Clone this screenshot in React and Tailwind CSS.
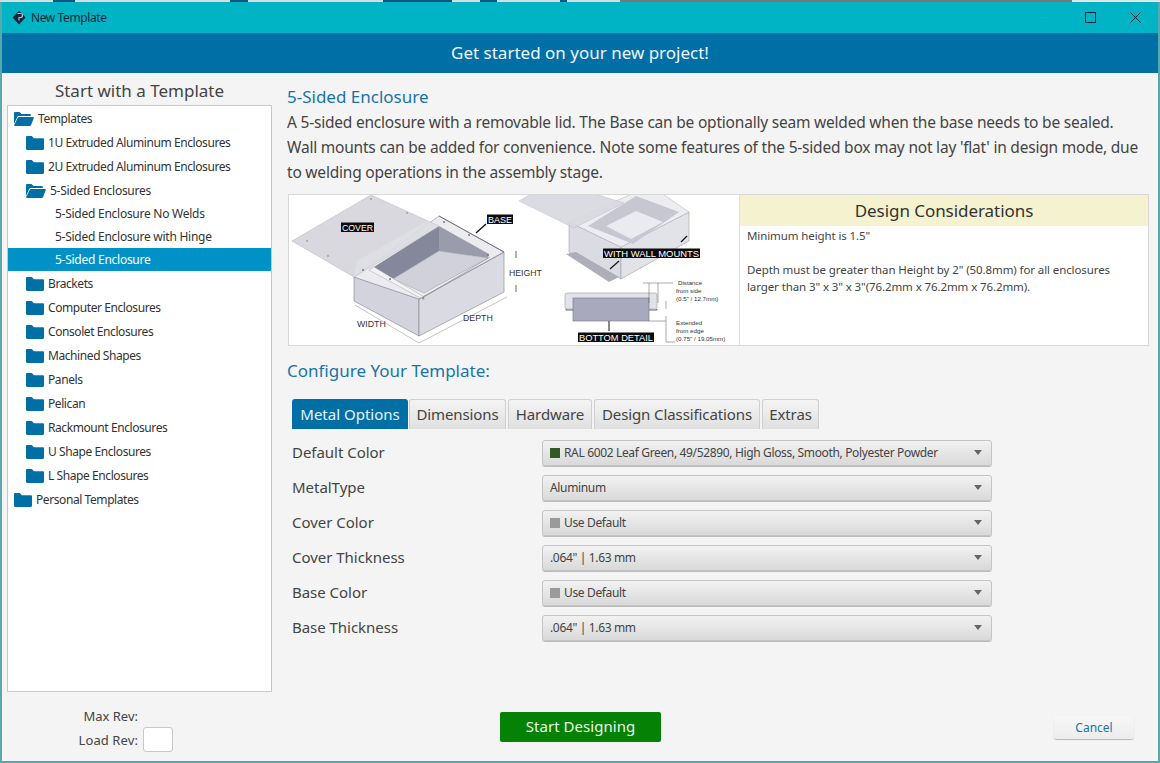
import React from "react";

const FONT = { fontFamily: '"Noto Sans", "Open Sans", sans-serif' };

function FolderClosed() {
  return (
    <svg width="18" height="14" viewBox="0 0 18 14" className="shrink-0">
      <path d="M0 1.2C0 .5.5 0 1.2 0h4.6l2 2.2h9c.7 0 1.2.5 1.2 1.2v9.4c0 .7-.5 1.2-1.2 1.2H1.2C.5 14 0 13.500 0 12.800z" fill="#006fa6" />
    </svg>
  );
}

function FolderOpen() {
  return (
    <svg width="20" height="14" viewBox="0 0 20 14" className="shrink-0">
      <path d="M0 12V1.200C0 .5.500 0 1.200 0h4.300l2 2h8.300c.6 0 1 .4 1 1v1H5c-1 0-1.500.4-1.900 1.200z" fill="#006fa6" />
      <path d="M1 14c-.7 0-1-.5-.8-1L3.600 5.900C3.900 5.300 4.400 5 5 5h14c.7 0 1.100.5.800 1.100l-2.700 7c-.2.600-.7.900-1.300.9z" fill="#006fa6" />
    </svg>
  );
}

function TreeRow({ label, pad, icon, h = "h-6", selected, extra = "", track = "tracking-[-0.42px]" }) {
  return (
    <div
      className={`flex items-center ${h} ${extra} gap-[4px] text-[12px] ${selected ? "bg-[#0092c7] text-white" : "text-[#333333]"}`}
      style={{ paddingLeft: pad }}
    >
      {icon === "closed" && <FolderClosed />}
      {icon === "open" && <FolderOpen />}
      <span className={`whitespace-nowrap ${track}`}>{label}</span>
    </div>
  );
}

function Tree() {
  const folders = ["Brackets", "Computer Enclosures", "Consolet Enclosures", "Machined Shapes", "Panels", "Pelican", "Rackmount Enclosures", "U Shape Enclosures", "L Shape Enclosures"];
  const leaf = "tracking-[-0.26px]";
  return (
    <div className="h-[587px] w-[265px] border border-[#c8c8c8] bg-white pt-[1px]">
      <TreeRow label="Templates" pad={6} icon="open" />
      <TreeRow label="1U Extruded Aluminum Enclosures" pad={18} icon="closed" />
      <TreeRow label="2U Extruded Aluminum Enclosures" pad={18} icon="closed" />
      <TreeRow label="5-Sided Enclosures" pad={18} icon="open" track={leaf} />
      <TreeRow label="5-Sided Enclosure No Welds" pad={47} h="h-[23px]" extra="-mt-px" track={leaf} />
      <TreeRow label="5-Sided Enclosure with Hinge" pad={47} h="h-[23px]" track={leaf} />
      <TreeRow label="5-Sided Enclosure" pad={47} h="h-[23px]" selected track={leaf} />
      <div className="mt-px">
        {folders.map((f) => (
          <TreeRow key={f} label={f} pad={18} icon="closed" />
        ))}
        <TreeRow label="Personal Templates" pad={6} icon="closed" />
      </div>
    </div>
  );
}

function Tag({ x, y, w, children }) {
  return (
    <g>
      <rect x={x} y={y - 8.500} width={w} height="9.500" fill="#0c0c0c" />
      <text x={x + w / 2} y={y - 0.300} textAnchor="middle" textLength={w - 2} lengthAdjust="spacingAndGlyphs" fontSize="8.800" fill="#fff" fontFamily="Liberation Sans">{children}</text>
    </g>
  );
}

function Drawing() {
  const dim = { fontFamily: "Liberation Sans", fill: "#333" };
  return (
    <svg width="450" height="150" viewBox="0 0 450 150" className="shrink-0 bg-white">
      {/* main box */}
      <polygon points="65,82 65,106 130,141 130,104" fill="#d2d3dc" stroke="#80808c" strokeWidth=".6" />
      <polygon points="130,104 130,141 215,97 215,57" fill="#d9dae2" stroke="#80808c" strokeWidth=".6" />
      <polygon points="65,82 150,21 215,57 130,104" fill="#ececf0" stroke="#8f8f99" strokeWidth=".6" />
      <polygon points="85,72 150,31 150,56 104,84" fill="#85879a" />
      <polygon points="150,31 200,59 199,63 150,56" fill="#9a9cab" />
      <polygon points="104,84 150,56 199,63 135,98" fill="#d0d1da" stroke="#9b9ba5" strokeWidth=".5" />
      <polygon points="85,72 135,102 135,105 80,75" fill="#f3f3f5" stroke="#8f8f99" strokeWidth=".4" />
      <path d="M135,102 L201,62M130,104 L215,57" stroke="#8f8f99" strokeWidth=".6" />
      <path d="M150,21 L215,57" stroke="#70707c" strokeWidth="1" />
      {/* cover */}
      <polygon points="3,46 82,0 150,31 65,82" fill="#cfd0d7" fillOpacity=".82" stroke="#b5b5bb" strokeWidth=".5" />
      <polygon points="68,66 138,26 150,31 65,82" fill="#e4e5ea" fillOpacity=".55" />
      <g fill="#777">
        <circle cx="82" cy="4" r=".8" /><circle cx="118" cy="18" r=".8" /><circle cx="18" cy="46" r=".8" /><circle cx="39" cy="61" r=".8" />
        <circle cx="74" cy="75" r="1" /><circle cx="101" cy="84" r="1" /><circle cx="134" cy="103" r="1" /><circle cx="199" cy="60" r="1" /><circle cx="180" cy="40" r="1" /><circle cx="155" cy="27" r="1" />
      </g>
      <Tag x={52} y={36} w={33}>COVER</Tag>
      <Tag x={198} y={28} w={26}>BASE</Tag>
      <path d="M197 29 L187 38" stroke="#111" strokeWidth="1.400" />
      <text x="220" y="81" fontSize="8.700" {...dim}>HEIGHT</text>
      <path d="M227 56v7M227 90v7" stroke="#222" strokeWidth=".7" />
      <text x="68" y="132" fontSize="8.800" {...dim}>WIDTH</text>
      <text x="174" y="126" fontSize="8.800" {...dim}>DEPTH</text>
      <path d="M66 110 L130 148 L218 102" stroke="#888" strokeWidth=".5" fill="none" />
      {/* wall mount box */}
      <polygon points="280,27 280,57 332,84 332,52" fill="#dadbe3" stroke="#8f8f99" strokeWidth=".5" />
      <polygon points="332,52 332,84 400,46 400,17" fill="#e2e3e9" stroke="#8f8f99" strokeWidth=".5" />
      <polygon points="280,27 345,-2 372,-2 400,17 332,52" fill="#ededf1" stroke="#aaaab2" strokeWidth=".5" />
      <polygon points="299,31 347,1 390,17 344,49" fill="#c6c7d0" />
      <polygon points="317,31 347,16 374,27 342,44" fill="#eaebef" />
      <polygon points="230,6 245,-3 300,-3 335,8 285,33" fill="#d8d9df" fillOpacity=".92" stroke="#b5b5bb" strokeWidth=".4" />
      <polygon points="277,59 287,57 330,82 320,87" fill="#adaeb9" />
      <Tag x={314} y={62} w={97}>WITH WALL MOUNTS</Tag>
      <path d="M330 66 L321 74" stroke="#111" strokeWidth="1.200" />
      <path d="M398 41 L392 47" stroke="#111" strokeWidth="1.200" />
      {/* bottom detail */}
      <rect x="276" y="98" width="92" height="16" rx="2" fill="#e2e3e8" stroke="#9a9aa3" strokeWidth=".6" />
      <rect x="284" y="103" width="76" height="23" fill="#a8a9bd" stroke="#6e7090" strokeWidth=".6" />
      <path d="M277 114v1h7M360 115h8v-1" stroke="#444" strokeWidth=".8" fill="none" />
      <Tag x={289} y={146} w={76}>BOTTOM DETAIL</Tag>
      <path d="M320 126v10" stroke="#111" strokeWidth="1" />
      <path d="M354 88h30M360 88v20M369 88v20M377 106v8M377 121v26h9M360 126h17" stroke="#555" strokeWidth=".5" fill="none" />
      <g fontSize="6.200" {...dim}>
        <text x="389" y="90">Distance</text>
        <text x="387" y="98">from side</text>
        <text x="387" y="106">(0.5" / 12.7mm)</text>
        <text x="387" y="130">Extended</text>
        <text x="387" y="138">from edge</text>
        <text x="387" y="146">(0.75" / 19.05mm)</text>
      </g>
    </svg>
  );
}

function Select({ swatch, label }) {
  return (
    <div className="flex h-[26px] w-[450px] items-center rounded-[3px] border border-[#c4c4c4] bg-gradient-to-b from-[#f2f2f2] to-[#d9d9d9] pl-[7px] pr-[9px] text-[12px] text-[#444444] shadow-[0_1px_0_#bbbbbb]">
      {swatch && <span className="mr-1 h-[10px] w-[10px] shrink-0" style={{ background: swatch }} />}
      <span className="flex-1 whitespace-nowrap tracking-[-0.35px]">{label}</span>
      <svg width="8" height="5" viewBox="0 0 8 5"><path d="M0 0h8L4 5z" fill="#666" /></svg>
    </div>
  );
}

const rows = [
  ["Default Color", "#2f5a23", "RAL 6002 Leaf Green, 49/52890, High Gloss, Smooth, Polyester Powder"],
  ["MetalType", null, "Aluminum"],
  ["Cover Color", "#9a9a9a", "Use Default"],
  ["Cover Thickness", null, '.064" | 1.63 mm'],
  ["Base Color", "#9a9a9a", "Use Default"],
  ["Base Thickness", null, '.064" | 1.63 mm'],
];

const tabs = [
  ["Dimensions", "w-[97px]"],
  ["Hardware", "w-[84px]"],
  ["Design Classifications", "w-[166px]"],
  ["Extras", "w-[57px]"],
];

export default function App() {
  return (
    <div className="flex h-[763px] w-[1160px] flex-col overflow-hidden bg-[#f4f4f4]" style={FONT}>
      <div className="flex h-[2px] shrink-0 bg-[#d8dcdf]">
        <div className="ml-[53px] w-[22px] bg-[#14557f]" />
        <div className="ml-[155px] w-[18px] bg-[#14557f]" />
        <div className="ml-[135px] w-[69px] bg-[#14557f]" />
        <div className="ml-[28px] w-[17px] bg-[#14557f]" />
        <div className="ml-[63px] w-[7px] bg-[#14557f]" />
        <div className="ml-[53px] w-[452px] bg-[#777777]" />
        <div className="flex-1 bg-[#e4e4e4]" />
      </div>
      <div className="flex min-h-0 flex-1 flex-col border-x-2 border-b-2 border-x-[#56a9ad] border-b-[#56a9ad]">
        <div className="flex h-[31px] shrink-0 items-center bg-[#00b4c5] pl-[10px] text-[12px] text-[#102a3a]">
          <svg width="14" height="15" viewBox="0 0 14 15" className="mr-[5px]">
            <path d="M7 0.500 13.500 7.500 7 14.500 0.500 7.500z" fill="#17293a" />
            <path d="M5.500 3.500h3a2 2 0 0 1 0 4H7v3" stroke="#9fc4d0" strokeWidth="1.200" fill="none" />
          </svg>
          <span className="flex-1 tracking-[-0.4px]">New Template</span>
          <span className="mr-[35px] h-px w-[10px] bg-[#4b9aa5]" />
          <span className="mr-[34px] h-[11px] w-[11px] border border-[#10283a]" />
          <svg width="11" height="11" viewBox="0 0 11 11" className="mr-[17px]"><path d="M.5.500l10 10M10.500.500l-10 10" stroke="#10283a" strokeWidth="1" /></svg>
        </div>
        <div className="flex h-10 shrink-0 items-center justify-center bg-[#006fa6] text-[17px] text-[#f0f6fa]">
          Get started on your new project!
        </div>

        <div className="flex min-h-0 flex-1">
          <div className="flex w-[285px] shrink-0 flex-col pl-[5px]">
            <div className="flex h-[32px] w-[265px] items-end justify-center pb-[2px] text-[17px] text-[#444444]">Start with a Template</div>
            <Tree />
            <div className="ml-[5px] mt-[13px] flex w-[161px] flex-col items-end text-[13px] leading-[22px] text-[#444444]">
              <div className="pr-[35px]">Max Rev:</div>
              <div className="flex items-center gap-[5px]">
                <span className="tracking-[0.1px]">Load Rev:</span>
                <span className="h-[25px] w-[30px] rounded-[3px] border border-[#c8c8c8] bg-white" />
              </div>
            </div>
          </div>

          <div className="flex min-w-0 flex-1 flex-col pr-[10px]">
            <div className="mt-[11px] text-[17px] leading-[26px] text-[#1874a8]">5-Sided Enclosure</div>
            <p className="w-[860px] text-[15.500px] leading-[25px] tracking-[-0.21px] text-[#444444]">
              A 5-sided enclosure with a removable lid. The Base can be optionally seam welded when the base needs to be sealed.<br />
              Wall mounts can be added for convenience. Note some features of the 5-sided box may not lay 'flat' in design mode, due<br />
              to welding operations in the assembly stage.
            </p>
            <div className="ml-px mt-[9px] flex h-[152px] w-[861px] overflow-hidden border border-[#d8d8d8] bg-white">
              <Drawing />
              <div className="flex-1 border-l border-[#e0e0e0]">
                <div className="flex h-[31px] items-center justify-center bg-[#f5f2cf] text-[17px] tracking-[-0.05px] text-[#333333]">Design Considerations</div>
                <div className="px-[7px] pt-[1px] text-[11.500px] leading-[17px] tracking-[-0.1px] text-[#444444]">
                  Minimum height is 1.5"<br /><br />
                  Depth must be greater than Height by 2" (50.8mm) for all enclosures<br />
                  larger than 3" x 3" x 3"(76.2mm x 76.2mm x 76.2mm).
                </div>
              </div>
            </div>
            <div className="mt-[12px] text-[17px] leading-[26px] text-[#1874a8]">Configure Your Template:</div>
            <div className="ml-[5px] mt-[15px] flex h-[30px] gap-[2px] text-[15px] tracking-[-0.1px] text-[#444444]">
              <div className="-mr-px flex w-[116px] items-center justify-center rounded-t-[3px] bg-[#006fa6] tracking-normal text-[#e8f3f8]">Metal Options</div>
              {tabs.map(([t, w]) => (
                <div key={t} className={`flex ${w} items-center justify-center whitespace-nowrap rounded-t-[3px] border border-b-0 border-[#cfcfcf] bg-gradient-to-b from-[#f4f4f4] to-[#e0e0e0]`}>{t}</div>
              ))}
            </div>
            <div className="ml-[5px] mt-[6px] flex flex-col">
              {rows.map(([l, s, v]) => (
                <div key={l} className="flex h-[35px] items-center">
                  <div className="w-[250px] text-[15px] tracking-[-0.03px] text-[#444444]">{l}</div>
                  <Select swatch={s} label={v} />
                </div>
              ))}
            </div>
            <div className="relative mt-[67px] flex items-start">
              <div className="ml-[213px] flex h-[30px] w-[161px] items-center justify-center rounded-[2px] bg-[#058105] pb-[2px] text-[15px] tracking-[0.05px] text-[#eaf7ea]">Start Designing</div>
              <div className="ml-auto mr-[14px] mt-[4px] flex h-[23px] w-[80px] items-center justify-center rounded-[3px] bg-gradient-to-b from-[#f7f7f7] to-[#ececec] text-[12px] text-[#1874a8] shadow-[0_1px_1px_#b5b5b5]">Cancel</div>
            </div>
          </div>
        </div>
      </div>
    </div>
  );
}
